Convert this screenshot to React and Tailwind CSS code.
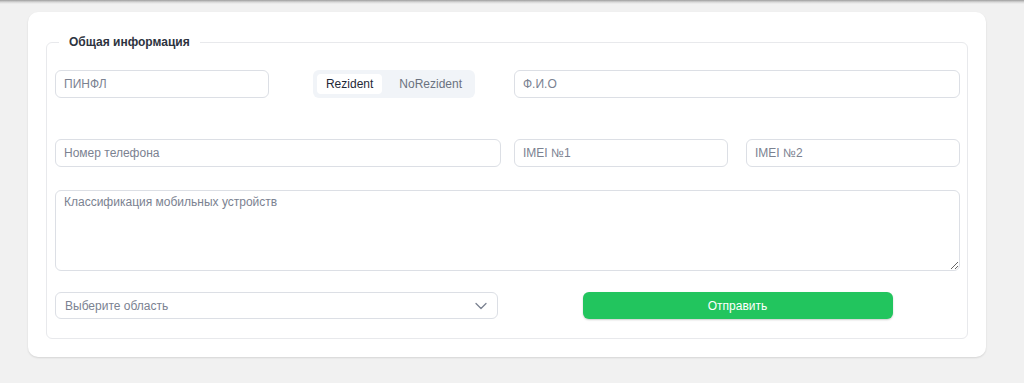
import React from "react";

export default function App() {
  const input =
    "h-[28px] w-full rounded-md border border-[#dcdfe5] bg-white px-[8px] text-[12px] text-[#374151] placeholder:text-[#7b8291] outline-none";
  return (
    <div
      className="min-h-[383px] w-[1024px] bg-[#f1f1f1]"
      style={{ fontFamily: '"Liberation Sans", Arial, sans-serif' }}
    >
      <div className="h-[4px] bg-gradient-to-b from-[#9d9d9d] via-[#d6d6d6] to-[#f1f1f1]" />
      <div className="ml-[28px] mr-[38px] mt-[8px] rounded-[10px] bg-white pb-[18px] pl-[18px] pr-[18px] pt-[22px] shadow-[0_1px_2px_rgba(0,0,0,0.12)]">
        <fieldset className="rounded-md border border-[#e8e9ec] pl-[8px] pr-[7px] pb-[19px] pt-[20px]">
          <legend className="ml-[4px] px-[10px] text-[12px] font-bold leading-[16px] text-[#2d3340]">
            Общая информация
          </legend>
          <div className="grid grid-cols-2 gap-x-[13px]">
            <div className="grid grid-cols-2 gap-x-[18px]">
              <input className={input} placeholder="ПИНФЛ" />
              <div className="flex justify-center">
                <div className="flex h-[28px] items-center rounded-md bg-[#f1f4f8] p-[4px]">
                  <button className="h-[20px] rounded-[4px] bg-white px-[9px] text-[12px] text-[#1f2937]">
                    Rezident
                  </button>
                  <button className="h-[20px] rounded-[4px] pl-[17px] pr-[9px] text-[12px] text-[#6b7280]">
                    NoRezident
                  </button>
                </div>
              </div>
            </div>
            <input className={input} placeholder="Ф.И.О" />
          </div>

          <div className="mt-[41px] grid grid-cols-2 gap-x-[13px]">
            <input className={input} placeholder="Номер телефона" />
            <div className="grid grid-cols-2 gap-x-[18px]">
              <input className={input} placeholder="IMEI №1" />
              <input className={input} placeholder="IMEI №2" />
            </div>
          </div>

          <textarea
            className="mt-[23px] block h-[81px] w-full rounded-md border border-[#dcdfe5] bg-white px-[8px] py-[2px] text-[12px] text-[#374151] placeholder:text-[#7b8291] outline-none"
            placeholder="Классификация мобильных устройств"
          />

          <div className="mt-[21px] grid grid-cols-2 gap-x-[13px]">
            <div className="flex h-[27px] w-[443px] items-center justify-between rounded-md border border-[#dcdfe5] bg-white pl-[9px] pr-[10px] text-[12px] text-[#7b8291]">
              <span>Выберите область</span>
              <svg width="12" height="8" viewBox="0 0 12 8" fill="none">
                <path d="M1 1.5L6 6.5L11 1.5" stroke="#7b8291" strokeWidth="1.3" strokeLinecap="round" strokeLinejoin="round" />
              </svg>
            </div>
            <div className="flex justify-center pl-[1px]">
              <button className="h-[27px] w-[310px] rounded-md bg-[#22c55e] text-[12px] text-white shadow-[0_1px_2px_rgba(0,0,0,0.2)]">
                Отправить
              </button>
            </div>
          </div>
        </fieldset>
      </div>
    </div>
  );
}
